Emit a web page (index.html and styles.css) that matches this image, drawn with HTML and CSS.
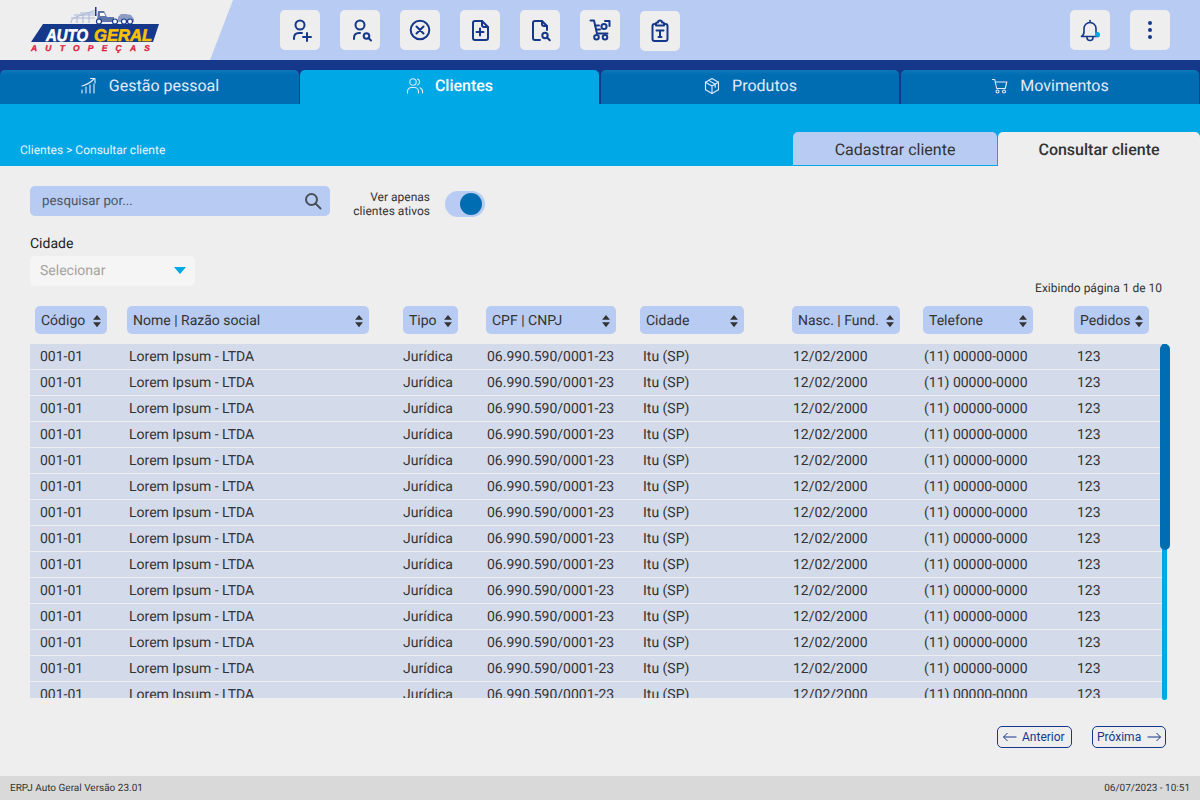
FILE: index.html
```html
<!DOCTYPE html>
<html lang="pt-BR">
<head>
    <meta charset="UTF-8">
    <meta name="viewport" content="width=device-width, initial-scale=1.0">
    <title>Consultar cliente</title>
    <link rel="stylesheet" href="styles.css">
</head>
<body>
    <!-- Top bar -->
    <header class="topbar">
        <div class="logo">
            <svg class="logo-svg" width="130" height="60" viewBox="0 0 130 60">
                <g fill="none" stroke="#aab7d6" stroke-width="1">
                    <path d="M41 23c0-3 2-5 5-6l20-7"/>
                    <path d="M41 18h24M44 15h21M50 13h15"/>
                    <path d="M47 23v-6M53 23v-8M59 23v-10"/>
                </g>
                <path d="M65 7h1.500v9H65z" fill="#15388a"/>
                <path d="M68 11h6l3 6h7v5H67z" fill="#5f76ad"/>
                <path d="M70 13h4l1.500 3H70z" fill="#ffffff"/>
                <path d="M88 17l3-3h5l5 1 3 4v3H88z" fill="#8c9cc4"/>
                <g fill="#ffffff" stroke="#15388a" stroke-width="1.200">
                    <circle cx="69" cy="21.500" r="2.500"/>
                    <circle cx="85" cy="21.500" r="2.500"/>
                    <circle cx="94" cy="21.500" r="2.500"/>
                    <circle cx="100" cy="21.500" r="2.500"/>
                </g>
                <path d="M13 24h116l-6 18H1z" fill="#15388a"/>
                <text class="logo-name" x="16" y="40.500" textLength="42" lengthAdjust="spacingAndGlyphs" fill="#ffffff" stroke="#ffffff" stroke-width=".6">AUTO</text>
                <text class="logo-name" x="64" y="40.500" textLength="58" lengthAdjust="spacingAndGlyphs" fill="#fbc200" stroke="#fbc200" stroke-width=".6">GERAL</text>
                <text class="logo-sub" x="1" y="51" textLength="119" fill="#e0193f" stroke="#e0193f" stroke-width=".3">AUTOPEÇAS</text>
            </svg>
        </div>
        <div class="actions">
            <button class="icon-btn">
                <svg viewBox="0 0 40 40" class="icon"><circle cx="20" cy="15" r="4.500"/><path d="M14 29v-1c0-3 2-5 5-5h3"/><path d="M23 27h8M27 23v8"/></svg>
            </button>
            <button class="icon-btn">
                <svg viewBox="0 0 40 40" class="icon"><circle cx="20" cy="15" r="4.500"/><path d="M14 29v-1c0-3 2-5 5-5h1"/><circle cx="26.500" cy="26" r="2.800"/><path d="M28.500 28l2.500 2.500"/></svg>
            </button>
            <button class="icon-btn">
                <svg viewBox="0 0 40 40" class="icon"><circle cx="20" cy="20" r="9.300"/><path d="M16.500 16.500l7 7M23.500 16.500l-7 7"/></svg>
            </button>
            <button class="icon-btn">
                <svg viewBox="0 0 40 40" class="icon"><path d="M15 11h7l6 6v11a2 2 0 0 1-2 2H15a2 2 0 0 1-2-2V13a2 2 0 0 1 2-2z"/><path d="M22 11v4a2 2 0 0 0 2 2h4"/><path d="M16.500 22h7M20 18.500v7"/></svg>
            </button>
            <button class="icon-btn">
                <svg viewBox="0 0 40 40" class="icon"><path d="M20 30h-5a2 2 0 0 1-2-2V13a2 2 0 0 1 2-2h7l5 5v4"/><path d="M22 11v3a2 2 0 0 0 2 2h3"/><circle cx="25" cy="25.500" r="2.700"/><path d="M27 27.500l2.800 2.800"/></svg>
            </button>
            <button class="icon-btn">
                <svg viewBox="0 0 40 40" class="icon"><path d="M10.500 10.500h3.500l3 13h10.500"/><path d="M15 15.500h4M16 19.500h4"/><circle cx="16.500" cy="27.300" r="2.300"/><circle cx="25" cy="27.300" r="2.300"/><circle cx="24" cy="16.500" r="2.600"/><path d="M25 11h4.500v5"/></svg>
            </button>
            <button class="icon-btn icon-btn-low">
                <svg viewBox="0 0 40 40" class="icon"><path d="M16 13h-1.500a2 2 0 0 0-2 2v13a2 2 0 0 0 2 2h11a2 2 0 0 0 2-2V15a2 2 0 0 0-2-2H24"/><path d="M16 14.500v-2a1 1 0 0 1 1-1h1a2 2 0 0 1 4 0h1a1 1 0 0 1 1 1v2z"/><path d="M16.500 19.500h7M20 19.500v6.500M18.500 26h3"/></svg>
            </button>
        </div>
        <div class="actions-right">
            <button class="icon-btn">
                <svg viewBox="0 0 40 40" class="icon icon-thin"><path d="M11.500 26.500c2-1 2.500-2.500 2.500-5v-3a6 6 0 0 1 12 0v3c0 2.500.5 4 2.500 5z"/><path d="M20 10.500v1.500"/><path d="M17 27v.5a3 3 0 0 0 6 0V27"/></svg>
                <span class="bell-dot"></span>
            </button>
            <button class="icon-btn">
                <svg viewBox="0 0 40 40" class="icon-fill"><circle cx="20" cy="13" r="2"/><circle cx="20" cy="20" r="2"/><circle cx="20" cy="27" r="2"/></svg>
            </button>
        </div>
    </header>

    <!-- Main nav -->
    <nav class="main-tabs">
        <a class="main-tab first">
            <svg viewBox="0 0 18 18" class="tab-icon"><path d="M2 16v-3M6 16v-6M10 16V8M14 16V7"/><path d="M2 9c4-1 8-3 12-7"/><path d="M10.500 1.500H15V6"/></svg>
            Gestão pessoal
        </a>
        <a class="main-tab active">
            <svg viewBox="0 0 18 18" class="tab-icon"><circle cx="7" cy="5" r="3.200"/><path d="M1.500 16v-1.500a4 4 0 0 1 4-4h3a4 4 0 0 1 4 4V16"/><path d="M11.500 2a3.200 3.200 0 0 1 0 6M14 10.700a4 4 0 0 1 2.500 3.800V16"/></svg>
            Clientes
        </a>
        <a class="main-tab">
            <svg viewBox="0 0 18 18" class="tab-icon"><path d="M9 1.500l6.500 3.700v7.600L9 16.500l-6.500-3.700V5.200z"/><path d="M2.500 5.200L9 9l6.500-3.800M9 9v7.500M5.700 3.400l6.500 3.800v3"/></svg>
            Produtos
        </a>
        <a class="main-tab">
            <svg viewBox="0 0 18 18" class="tab-icon"><path d="M1.500 2.500h2.200l2 9h8.500l1.600-6.500H4.400"/><circle cx="6.500" cy="14.500" r="1.500"/><circle cx="13" cy="14.500" r="1.500"/></svg>
            Movimentos
        </a>
    </nav>

    <!-- Breadcrumb band -->
    <div class="band">
        <div class="breadcrumb">Clientes &gt; Consultar cliente</div>
        <div class="sub-tabs">
            <a class="sub-tab">Cadastrar cliente</a>
            <a class="sub-tab active">Consultar cliente</a>
        </div>
    </div>

    <main class="content">
        <section class="filters">
            <div>
                <div class="filter-row">
                    <div class="search-box">
                        <span>pesquisar por...</span>
                        <svg viewBox="0 0 18 18" class="search-icon"><circle cx="7.500" cy="7.500" r="5.500"/><path d="M11.500 11.500l5 5"/></svg>
                    </div>
                    <div class="toggle-label">Ver apenas<br>clientes ativos</div>
                    <div class="toggle"><span class="toggle-knob"></span></div>
                </div>
                <label class="field-label">Cidade</label>
                <div class="select-box">
                    <span>Selecionar</span>
                    <span class="select-arrow"></span>
                </div>
            </div>
            <div class="page-info">Exibindo página 1 de 10</div>
        </section>

        <div class="table-head">
            <div class="th th-codigo">Código<svg viewBox="0 0 10 16" class="sort"><path d="M5 1l4.500 5.500h-9zM5 15L.5 9.500h9z"/></svg></div>
            <div class="th th-nome">Nome | Razão social<svg viewBox="0 0 10 16" class="sort"><path d="M5 1l4.500 5.500h-9zM5 15L.5 9.500h9z"/></svg></div>
            <div class="th th-tipo">Tipo<svg viewBox="0 0 10 16" class="sort"><path d="M5 1l4.500 5.500h-9zM5 15L.5 9.500h9z"/></svg></div>
            <div class="th th-doc">CPF | CNPJ<svg viewBox="0 0 10 16" class="sort"><path d="M5 1l4.500 5.500h-9zM5 15L.5 9.500h9z"/></svg></div>
            <div class="th th-cidade">Cidade<svg viewBox="0 0 10 16" class="sort"><path d="M5 1l4.500 5.500h-9zM5 15L.5 9.500h9z"/></svg></div>
            <div class="th th-nasc">Nasc. | Fund.<svg viewBox="0 0 10 16" class="sort"><path d="M5 1l4.500 5.500h-9zM5 15L.5 9.500h9z"/></svg></div>
            <div class="th th-tel">Telefone<svg viewBox="0 0 10 16" class="sort"><path d="M5 1l4.500 5.500h-9zM5 15L.5 9.500h9z"/></svg></div>
            <div class="th th-ped">Pedidos<svg viewBox="0 0 10 16" class="sort"><path d="M5 1l4.500 5.500h-9zM5 15L.5 9.500h9z"/></svg></div>
        </div>

        <div class="table-wrap">
            <div class="rows">
                <div class="row"><span>001-01</span><span>Lorem Ipsum - LTDA</span><span>Jurídica</span><span>06.990.590/0001-23</span><span>Itu (SP)</span><span>12/02/2000</span><span>(11) 00000-0000</span><span>123</span></div>
                <div class="row"><span>001-01</span><span>Lorem Ipsum - LTDA</span><span>Jurídica</span><span>06.990.590/0001-23</span><span>Itu (SP)</span><span>12/02/2000</span><span>(11) 00000-0000</span><span>123</span></div>
                <div class="row"><span>001-01</span><span>Lorem Ipsum - LTDA</span><span>Jurídica</span><span>06.990.590/0001-23</span><span>Itu (SP)</span><span>12/02/2000</span><span>(11) 00000-0000</span><span>123</span></div>
                <div class="row"><span>001-01</span><span>Lorem Ipsum - LTDA</span><span>Jurídica</span><span>06.990.590/0001-23</span><span>Itu (SP)</span><span>12/02/2000</span><span>(11) 00000-0000</span><span>123</span></div>
                <div class="row"><span>001-01</span><span>Lorem Ipsum - LTDA</span><span>Jurídica</span><span>06.990.590/0001-23</span><span>Itu (SP)</span><span>12/02/2000</span><span>(11) 00000-0000</span><span>123</span></div>
                <div class="row"><span>001-01</span><span>Lorem Ipsum - LTDA</span><span>Jurídica</span><span>06.990.590/0001-23</span><span>Itu (SP)</span><span>12/02/2000</span><span>(11) 00000-0000</span><span>123</span></div>
                <div class="row"><span>001-01</span><span>Lorem Ipsum - LTDA</span><span>Jurídica</span><span>06.990.590/0001-23</span><span>Itu (SP)</span><span>12/02/2000</span><span>(11) 00000-0000</span><span>123</span></div>
                <div class="row"><span>001-01</span><span>Lorem Ipsum - LTDA</span><span>Jurídica</span><span>06.990.590/0001-23</span><span>Itu (SP)</span><span>12/02/2000</span><span>(11) 00000-0000</span><span>123</span></div>
                <div class="row"><span>001-01</span><span>Lorem Ipsum - LTDA</span><span>Jurídica</span><span>06.990.590/0001-23</span><span>Itu (SP)</span><span>12/02/2000</span><span>(11) 00000-0000</span><span>123</span></div>
                <div class="row"><span>001-01</span><span>Lorem Ipsum - LTDA</span><span>Jurídica</span><span>06.990.590/0001-23</span><span>Itu (SP)</span><span>12/02/2000</span><span>(11) 00000-0000</span><span>123</span></div>
                <div class="row"><span>001-01</span><span>Lorem Ipsum - LTDA</span><span>Jurídica</span><span>06.990.590/0001-23</span><span>Itu (SP)</span><span>12/02/2000</span><span>(11) 00000-0000</span><span>123</span></div>
                <div class="row"><span>001-01</span><span>Lorem Ipsum - LTDA</span><span>Jurídica</span><span>06.990.590/0001-23</span><span>Itu (SP)</span><span>12/02/2000</span><span>(11) 00000-0000</span><span>123</span></div>
                <div class="row"><span>001-01</span><span>Lorem Ipsum - LTDA</span><span>Jurídica</span><span>06.990.590/0001-23</span><span>Itu (SP)</span><span>12/02/2000</span><span>(11) 00000-0000</span><span>123</span></div>
                <div class="row"><span>001-01</span><span>Lorem Ipsum - LTDA</span><span>Jurídica</span><span>06.990.590/0001-23</span><span>Itu (SP)</span><span>12/02/2000</span><span>(11) 00000-0000</span><span>123</span></div>
            </div>
            <div class="scroll-track"><div class="scroll-thumb"></div></div>
        </div>

        <div class="pager">
            <button class="pager-btn">
                <svg viewBox="0 0 14 10" class="arrow"><path d="M13.500 5H.5M4.500 1l-4 4 4 4"/></svg>
                Anterior
            </button>
            <button class="pager-btn pager-next">
                Próxima
                <svg viewBox="0 0 14 10" class="arrow"><path d="M.5 5h13M9.500 1l4 4-4 4"/></svg>
            </button>
        </div>
    </main>

    <footer class="footer">
        <span>ERPJ Auto Geral Versão 23.01</span>
        <span>06/07/2023 - 10:51</span>
    </footer>
</body>
</html>
```

FILE: styles.css
```css
* {
    box-sizing: border-box;
}

body {
    margin: 0;
    height: 800px;
    overflow: hidden;
    display: flex;
    flex-direction: column;
    font-family: 'Roboto', sans-serif;
    text-rendering: geometricPrecision;
    background-color: #eeeeee;
    color: #333;
}

/* Top bar */
.topbar {
    height: 60px;
    flex-shrink: 0;
    display: flex;
    align-items: center;
    background-color: #b8cbf2;
}

.logo {
    width: 233px;
    height: 60px;
    padding-left: 30px;
    flex-shrink: 0;
    background-color: #eeeeee;
    clip-path: polygon(0 0, 100% 0, 210px 100%, 0 100%);
}

.logo-svg {
    display: block;
}

.logo-name {
    font-family: 'Liberation Sans', sans-serif;
    font-size: 17px;
    font-weight: bold;
    font-style: italic;
}

.logo-sub {
    font-family: 'Liberation Sans', sans-serif;
    font-size: 8.5px;
    font-weight: bold;
    font-style: italic;
}

.actions {
    display: flex;
    gap: 20px;
    margin-left: 47px;
}

.actions-right {
    display: flex;
    gap: 20px;
    margin-left: auto;
    margin-right: 30px;
}

.icon-btn {
    position: relative;
    width: 40px;
    height: 40px;
    padding: 0;
    border: none;
    border-radius: 5px;
    background-color: #eeeeee;
}

.icon-btn-low {
    top: 1px;
}

.icon {
    display: block;
    width: 40px;
    height: 40px;
    fill: none;
    stroke: #15388a;
    stroke-width: 2;
    stroke-linecap: round;
    stroke-linejoin: round;
}

.icon-thin {
    stroke-width: 1.6;
}

.icon-fill {
    display: block;
    width: 40px;
    height: 40px;
    fill: #15388a;
}

.bell-dot {
    position: absolute;
    left: 25px;
    top: 22px;
    width: 5px;
    height: 5px;
    border-radius: 50%;
    background-color: #00a8e6;
}

/* Main tabs */
.main-tabs {
    height: 44px;
    flex-shrink: 0;
    padding-top: 10px;
    display: flex;
    background-color: #15388a;
}

.main-tab {
    width: 298px;
    margin-left: 2px;
    padding-bottom: 3px;
    display: flex;
    align-items: center;
    justify-content: center;
    gap: 11px;
    border-radius: 5px 5px 0 0;
    background: linear-gradient(#0f78b8, #006db3 5px);
    color: #e4eaf8;
    font-size: 16px;
}

.main-tab.first {
    width: 299px;
    margin-left: 0;
}

.main-tab.active {
    width: 299px;
    margin-left: 1px;
    background: #00a8e6;
    color: #fff;
    font-weight: 500;
}

.tab-icon {
    width: 18px;
    height: 18px;
    fill: none;
    stroke: #e4eaf8;
    stroke-width: 1.1;
    stroke-linecap: round;
    stroke-linejoin: round;
}

/* Band with breadcrumb */
.band {
    height: 62px;
    flex-shrink: 0;
    display: flex;
    align-items: flex-end;
    justify-content: space-between;
    background-color: #00a8e6;
}

.breadcrumb {
    padding: 0 0 8px 20px;
    font-size: 12px;
    line-height: 16px;
    color: #eef4fb;
}

.sub-tabs {
    display: flex;
    gap: 1px;
}

.sub-tab {
    width: 204px;
    height: 34px;
    padding-top: 2px;
    display: flex;
    align-items: center;
    justify-content: center;
    border-radius: 5px 5px 0 0;
    border-bottom: 1px solid #00a8e6;
    background-color: #b8cbf2;
    font-size: 16px;
    color: #333;
}

.sub-tab.active {
    width: 202px;
    padding-top: 1px;
    border-bottom: none;
    background-color: #eeeeee;
    font-weight: 500;
}

/* Content */
.content {
    flex: 1;
    min-height: 0;
    padding: 20px 30px 0;
}

.filters {
    height: 110px;
    display: flex;
    justify-content: space-between;
}

.filter-row {
    display: flex;
    align-items: flex-start;
}

.search-box {
    width: 300px;
    height: 30px;
    padding: 1px 8px 0 12px;
    display: flex;
    align-items: center;
    justify-content: space-between;
    border-radius: 5px;
    background-color: #b8cbf2;
    font-size: 13.3px;
    color: #4c5563;
}

.search-icon {
    width: 18px;
    height: 18px;
    margin-top: -1px;
    fill: none;
    stroke: #4a4f58;
    stroke-width: 2;
    stroke-linecap: round;
}

.toggle-label {
    width: 100px;
    padding-top: 4px;
    text-align: right;
    font-size: 12px;
    line-height: 14px;
}

.toggle {
    width: 40px;
    height: 26px;
    margin: 5px 0 0 15px;
    padding: 2px 3px;
    display: flex;
    justify-content: flex-end;
    border-radius: 13px;
    background-color: #b8cbf2;
}

.toggle-knob {
    width: 22px;
    height: 22px;
    border-radius: 50%;
    background-color: #006db3;
}

.field-label {
    display: block;
    margin-top: 17px;
    font-size: 14px;
    line-height: 18px;
    color: #222;
}

.select-box {
    width: 165px;
    height: 30px;
    margin-top: 3px;
    padding: 0 9px 1px 10px;
    display: flex;
    align-items: center;
    justify-content: space-between;
    border-radius: 5px;
    background-color: #f5f5f5;
    font-size: 14px;
    color: #a3a3a3;
}

.select-arrow {
    width: 0;
    height: 0;
    border-left: 6px solid transparent;
    border-right: 6px solid transparent;
    border-top: 7px solid #00a8e6;
}

.page-info {
    align-self: flex-end;
    margin-right: 8px;
    font-size: 12px;
    line-height: 16px;
}

/* Table header */
.table-head {
    height: 28px;
    margin-top: 10px;
    padding-left: 5px;
    display: flex;
}

.th {
    height: 28px;
    padding: 1px 5px 0 6px;
    flex-shrink: 0;
    display: flex;
    align-items: center;
    justify-content: space-between;
    border-radius: 5px;
    background-color: #b8cbf2;
    font-size: 14px;
}

.sort {
    width: 10px;
    height: 14px;
    fill: #333;
}

.th-codigo { width: 72px; margin-right: 20px; }
.th-nome { width: 242px; margin-right: 34px; }
.th-tipo { width: 55px; margin-right: 28px; }
.th-doc { width: 130px; margin-right: 24px; }
.th-cidade { width: 104px; margin-right: 48px; }
.th-nasc { width: 108px; margin-right: 23px; }
.th-tel { width: 110px; margin-right: 41px; }
.th-ped { width: 75px; }

/* Table rows */
.table-wrap {
    position: relative;
    height: 356px;
    margin-top: 10px;
}

.rows {
    width: 1132px;
    height: 354px;
    overflow: hidden;
}

.row {
    height: 26px;
    padding-left: 10px;
    display: grid;
    grid-template-columns: 89px 274px 84px 156px 150px 131px 153px 60px;
    align-items: center;
    border-bottom: 1px solid #eeeeee;
    background-color: #d3daea;
    font-size: 14px;
}

.scroll-track {
    position: absolute;
    left: 1132px;
    top: 0;
    width: 5px;
    height: 356px;
    border-radius: 0 0 3px 3px;
    background-color: #00a8e6;
}

.scroll-thumb {
    position: absolute;
    left: -2px;
    top: 0;
    width: 10px;
    height: 206px;
    border-radius: 5px;
    background-color: #006db3;
}

/* Pagination */
.pager {
    margin-top: 26px;
    padding-right: 4px;
    display: flex;
    justify-content: flex-end;
    gap: 20px;
}

.pager-btn {
    width: 75px;
    height: 22px;
    padding: 0 4px 0 5px;
    display: flex;
    align-items: center;
    gap: 5px;
    border: 1px solid #15388a;
    border-radius: 5px;
    background: none;
    font-family: 'Roboto', sans-serif;
    font-size: 12px;
    color: #15388a;
}

.pager-next {
    width: 74px;
    padding: 0 4px;
    justify-content: space-between;
}

.arrow {
    width: 14px;
    height: 10px;
    fill: none;
    stroke: #15388a;
    stroke-width: 1;
}

/* Footer */
.footer {
    height: 24px;
    flex-shrink: 0;
    padding: 0 10px;
    display: flex;
    align-items: center;
    justify-content: space-between;
    background-color: #d9d9d9;
    font-size: 10px;
}
```
